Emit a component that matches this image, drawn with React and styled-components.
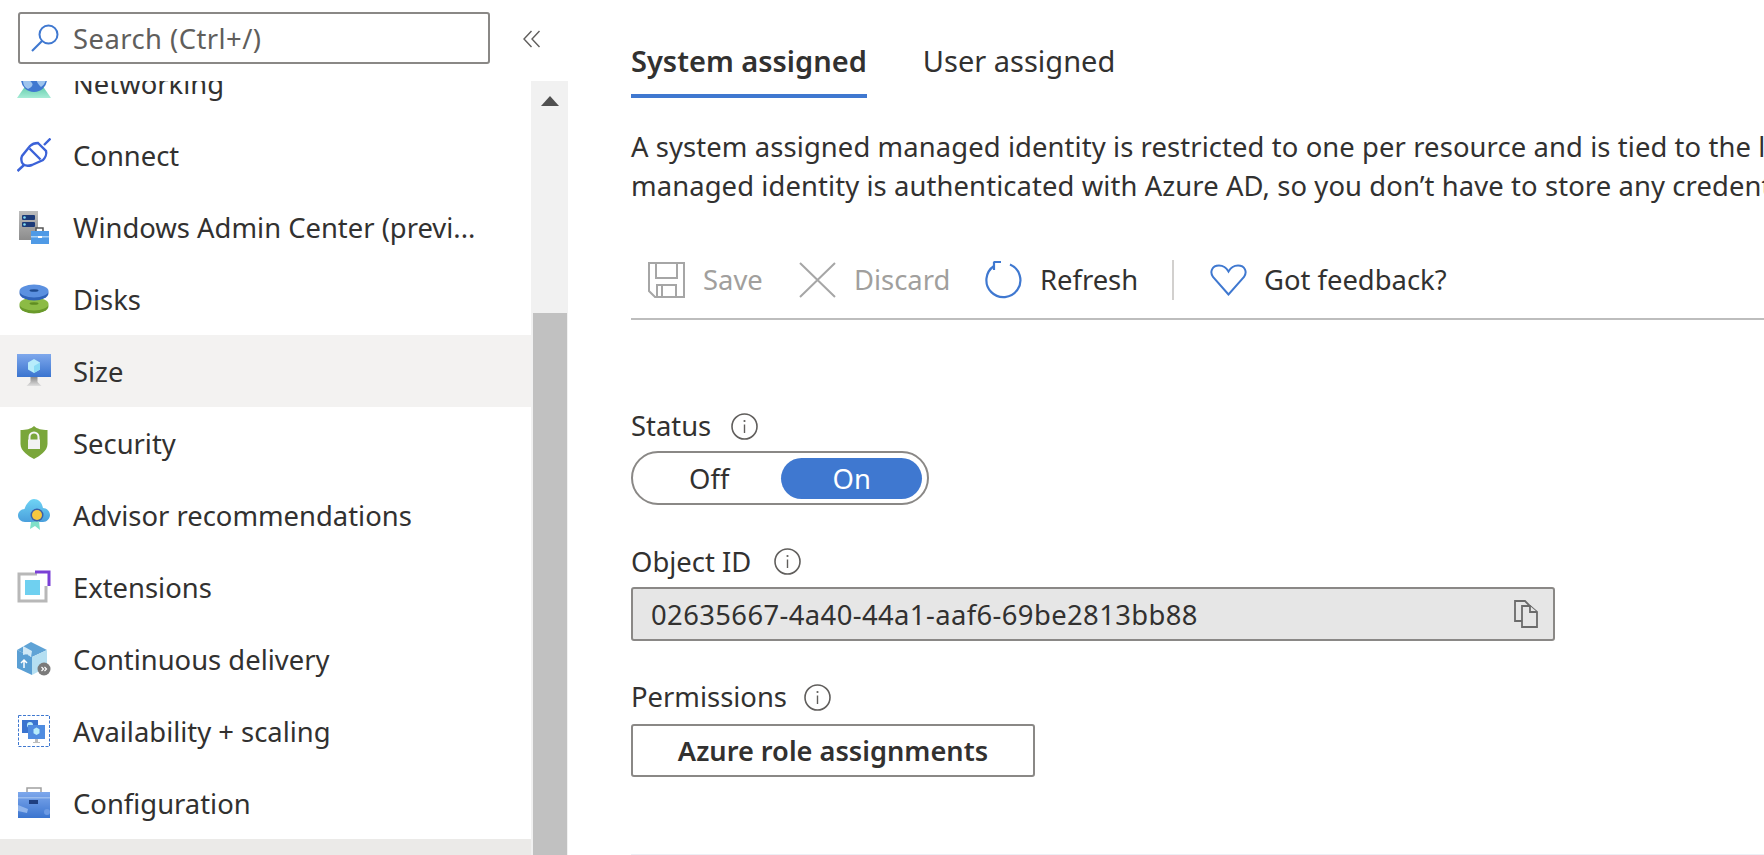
import React from "react";
import styled, { createGlobalStyle } from "styled-components";

const Global = createGlobalStyle`
  html, body { margin: 0; padding: 0; background: #fff; }
  body { font-family: "Noto Sans", "Open Sans", sans-serif; color: #323130; }
  * { box-sizing: border-box; }
`;

const Page = styled.div`
  display: flex;
  width: 1764px;
  height: 855px;
  overflow: hidden;
  background: #fff;
`;

const Sidebar = styled.aside`
  width: 568px;
  flex: none;
  display: flex;
  flex-direction: column;
  height: 855px;
`;

const SearchRow = styled.div`
  height: 81px;
  flex: none;
  padding: 12px 0 0 18px;
  display: flex;
  align-items: flex-start;
`;

const SearchBox = styled.div`
  width: 472px;
  height: 52px;
  border: 2px solid #8a8886;
  border-radius: 3px;
  display: flex;
  align-items: center;
  padding-left: 11px;
  gap: 14px;
  font-size: 27.4px;
  letter-spacing: 0.45px;
  color: #605e5c;
`;

const Collapse = styled.div`
  margin: 18px 0 0 33px;
  display: flex;
`;

const ListArea = styled.div`
  flex: 1;
  display: flex;
  min-height: 0;
`;

const ListClip = styled.div`
  width: 531px;
  overflow: hidden;
`;

const List = styled.ul`
  list-style: none;
  margin: -34px 0 0;
  padding: 0;
`;

const Row = styled.li`
  height: 72px;
  display: flex;
  align-items: center;
  padding-left: 17px;
  gap: 22px;
  font-size: 27.4px;
  white-space: nowrap;
  color: #323130;
  background: ${(p) => p.$bg || "transparent"};
`;

const RowLabel = styled.span`
  padding-top: 1px;
`;

const Track = styled.div`
  width: 37px;
  background: #f1f1f1;
  display: flex;
  flex-direction: column;
  align-items: center;
`;

const ArrowUp = styled.div`
  margin-top: 15px;
  width: 0;
  height: 0;
  border-left: 9px solid transparent;
  border-right: 9px solid transparent;
  border-bottom: 10px solid #505050;
`;

const Thumb = styled.div`
  margin-top: 207px;
  width: 34px;
  flex: 1;
  background: #c1c1c1;
`;

const Main = styled.main`
  flex: 1;
  min-width: 0;
  padding-left: 63px;
  overflow: hidden;
`;

const Tabs = styled.div`
  height: 98px;
  display: flex;
  gap: 56px;
`;

const Tab = styled.div`
  font-size: 29px;
  line-height: 46px;
  height: 98px;
  white-space: nowrap;
  font-weight: ${(p) => (p.$active ? 600 : 400)};
  display: flex;
  align-items: flex-end;
  padding-bottom: 10px;
  border-bottom: 4px solid ${(p) => (p.$active ? "#3f78d0" : "transparent")};
`;

const Desc = styled.p`
  margin: 30px 0 0;
  font-size: 27.4px;
  letter-spacing: 0.1px;
  line-height: 38.5px;
  white-space: nowrap;
`;

const Toolbar = styled.div`
  height: 115px;
  padding: 55px 0 0 17px;
  border-bottom: 2px solid #bdbdbd;
  display: flex;
  align-items: flex-start;
`;

const ToolItem = styled.div`
  width: ${(p) => p.$w}px;
  height: 40px;
  display: flex;
  align-items: center;
  gap: ${(p) => p.$gap || 18}px;
  font-size: 27.4px;
  line-height: 38px;
  white-space: nowrap;
  color: ${(p) => (p.$off ? "#a19f9d" : "#323130")};
`;

const ToolSep = styled.div`
  width: 2px;
  height: 40px;
  margin-right: 36px;
  background: #d2d0ce;
`;

const Label = styled.div`
  height: 36px;
  display: flex;
  align-items: center;
  gap: ${(p) => p.$gap}px;
  font-size: 27.4px;
  line-height: 34px;
  padding-bottom: ${(p) => p.$lift}px;
  margin-top: ${(p) => p.$top}px;
`;

const Toggle = styled.div`
  margin-top: 6px;
  width: 298px;
  height: 54px;
  border: 2px solid #8a8886;
  border-radius: 27px;
  display: flex;
  align-items: center;
  padding: 0 5px 0 4px;
  font-size: 27.4px;
`;

const ToggleOption = styled.div`
  width: ${(p) => p.$w}px;
  height: 41px;
  border-radius: 21px;
  display: flex;
  align-items: center;
  justify-content: center;
  color: ${(p) => (p.$on ? "#fff" : "#323130")};
  background: ${(p) => (p.$on ? "#3f78d0" : "transparent")};
`;

const ReadOnly = styled.div`
  margin-top: 6px;
  width: 924px;
  height: 54px;
  background: #e6e6e6;
  border: 2px solid #8a8886;
  border-radius: 3px;
  display: flex;
  align-items: center;
  justify-content: space-between;
  padding: 0 15px 0 18px;
  font-size: 27.4px;
  letter-spacing: 0.4px;
`;

const RoleButton = styled.button`
  margin-top: 8px;
  display: block;
  width: 404px;
  height: 53px;
  background: #fff;
  border: 2px solid #8a8886;
  border-radius: 3px;
  font: 600 27.2px "Noto Sans", sans-serif;
  color: #323130;
`;

const BottomRule = styled.div`
  margin-top: 77px;
  height: 1px;
  background: #edeff5;
`;

const Ic = ({ children, w = 34, h = 34 }) => (
  <svg width={w} height={h} viewBox={`0 0 ${w} ${h}`} fill="none" style={{ flex: "none" }}>
    {children}
  </svg>
);

const SearchIcon = () => (
  <Ic w={28} h={28}>
    <circle cx="17.5" cy="10.5" r="9" stroke="#3f78d0" strokeWidth="2" />
    <path d="M11 17 1 27" stroke="#3f78d0" strokeWidth="2.2" />
  </Ic>
);

const Chevrons = () => (
  <Ic w={18} h={18}>
    <path d="M8.5 1 1 9l7.5 8M16.5 1 9 9l7.5 8" stroke="#605e5c" strokeWidth="1.4" />
  </Ic>
);

const Networking = () => (
  <Ic>
    <defs>
      <linearGradient id="nb" x1="0" y1="0" x2="0" y2="1">
        <stop offset="0" stopColor="#5cc9a7" />
        <stop offset="1" stopColor="#a6ecd6" />
      </linearGradient>
    </defs>
    <path d="M0 32h34L25 19H9z" fill="url(#nb)" />
    <circle cx="17" cy="13" r="13" fill="#3f78d0" />
    <path d="M6 14c4-2 7 0 9 3s-2 5-4 6c-4-2-5-5-5-9zM20 13c3-2 7-2 9-1 0 4-2 7-5 9-2-2-5-5-4-8z" fill="#9ec4ee" />
  </Ic>
);

const Connect = () => (
  <Ic>
    <g stroke="#3b62d8" strokeWidth="2.4" fill="none">
      <path d="M0.5 33 7 27M27 7 33.5 0.5" />
      <path d="M21 5 29 13c1 3-1 7-3 9L15 27c-3 1-7 1-9-1s-2-6-1-8L13 8c2-2 5-3 8-3z" />
      <path d="M12.5 10.500 23.500 21.500" />
    </g>
  </Ic>
);

const AdminCenter = () => (
  <Ic>
    <defs>
      <linearGradient id="as" x1="0" y1="0" x2="0" y2="1">
        <stop offset="0" stopColor="#bdbdbd" />
        <stop offset="1" stopColor="#8c8c8c" />
      </linearGradient>
    </defs>
    <rect x="2" y="1" width="19" height="29" fill="url(#as)" />
    <rect x="5" y="5" width="13" height="5" rx="1" fill="#1c3a78" />
    <rect x="5" y="12" width="13" height="5" rx="1" fill="#1c3a78" />
    <circle cx="7.500" cy="7.500" r="1.300" fill="#7fdcf5" />
    <circle cx="7.500" cy="14.500" r="1.300" fill="#7fdcf5" />
    <path d="M19 21v-3h7v3" stroke="#555" strokeWidth="1.500" fill="#fff" />
    <rect x="14" y="21" width="18" height="13" fill="#4f9ae6" />
    <rect x="14" y="26" width="18" height="1.500" fill="#a8d0f5" />
    <rect x="21" y="26" width="4" height="2" fill="#fff" />
  </Ic>
);

const Disks = () => (
  <Ic>
    <ellipse cx="17" cy="24" rx="14.500" ry="7.500" fill="#6a9a2b" />
    <ellipse cx="17" cy="22" rx="14.500" ry="6.500" fill="#8cbb45" />
    <ellipse cx="17" cy="21.500" rx="4.500" ry="1.300" fill="#5f8c22" />
    <ellipse cx="17" cy="11" rx="14.500" ry="7.500" fill="#2f62b8" />
    <ellipse cx="17" cy="9" rx="14.500" ry="6.500" fill="#5b90e0" />
    <ellipse cx="17" cy="8.500" rx="4.500" ry="1.300" fill="#1e4a90" />
  </Ic>
);

const SizeIcon = () => (
  <Ic>
    <defs>
      <linearGradient id="sm" x1="0" y1="0" x2="0" y2="1">
        <stop offset="0" stopColor="#7ea8ec" />
        <stop offset="1" stopColor="#3a74cf" />
      </linearGradient>
      <linearGradient id="st" x1="0" y1="0" x2="0" y2="1">
        <stop offset="0" stopColor="#8a8a8a" />
        <stop offset="1" stopColor="#e0e0e0" />
      </linearGradient>
    </defs>
    <path d="M13.500 23h7v5l4 4H9.500l4-4z" fill="url(#st)" />
    <rect width="34" height="23" fill="url(#sm)" />
    <path d="M17 5l6 3.500v7L17 19l-6-3.500v-7z" fill="#b7ecfb" />
    <path d="M17 12l6-3.500v7L17 19z" fill="#8bdcf5" />
  </Ic>
);

const Security = () => (
  <Ic w={34} h={34}>
    <path d="M17 0c3 3 8 4 13.500 4v14c0 7-8 12-13.500 15C11.500 30 3.500 25 3.500 18V4C9 4 14 3 17 0z" fill="#7aa63a" />
    <path d="M12.500 14v-3a4.500 4.500 0 0 1 9 0v3" stroke="#f4f4f4" strokeWidth="2" />
    <rect x="11" y="13.500" width="12" height="9.500" fill="#f2f2f2" />
  </Ic>
);

const Advisor = () => (
  <Ic>
    <defs>
      <linearGradient id="ad" x1="0" y1="0" x2="0" y2="1">
        <stop offset="0" stopColor="#6fd4f5" />
        <stop offset="1" stopColor="#4a9fdc" />
      </linearGradient>
    </defs>
    <path d="M8 24c-4 0-7-3-7-6.500S4 11 7.500 11C9 6 13 1 17 1s8 3 9 9c4 0 7 3.500 7 7s-3 7-7 7z" fill="url(#ad)" />
    <path d="M14 24l-1 7 5-3 5 4-1-9z" fill="#7fe0c8" />
    <circle cx="20" cy="17" r="6.500" fill="#3a5fa8" />
    <circle cx="20" cy="17" r="5" fill="#f6c83f" />
  </Ic>
);

const Extensions = () => (
  <Ic>
    <path d="M20 4H2v27h27V16" stroke="#b8b8b8" strokeWidth="3" fill="none" />
    <path d="M18 2h14v14" stroke="#7a3fd6" strokeWidth="3" fill="none" />
    <rect x="8" y="10" width="15" height="15" fill="#6fd0f0" />
  </Ic>
);

const Delivery = () => (
  <Ic>
    <path d="M0 8 14 0 30 8 15 15z" fill="#5fa3d6" />
    <path d="M0 8v18l15 7V15z" fill="#5a9fd4" />
    <path d="M15 15v18l15-8V8z" fill="#b5dff2" />
    <path d="M6 4l9 5-1 6-4-3-4 1z" fill="#cfe8f6" />
    <path d="M7 26v-8M4 21l3-3 3 3" stroke="#fff" strokeWidth="1.500" />
    <circle cx="27" cy="27" r="6.500" fill="#7a7a7a" />
    <path d="M24.500 25l2 2-2 2M27.500 25l2 2-2 2" stroke="#fff" strokeWidth="1.200" />
  </Ic>
);

const Availability = () => (
  <Ic>
    <rect x="1.500" y="1.500" width="31" height="31" stroke="#3f78d0" strokeWidth="1" strokeDasharray="3 1.500" />
    <rect x="5" y="6" width="16" height="13" fill="#3a74cf" />
    <circle cx="13" cy="11" r="3" fill="#b7ecfb" />
    <rect x="11" y="11" width="17" height="14" fill="#4f8ce0" />
    <path d="M19.500 13.500l3 1.700v4l-3 1.700-3-1.700v-4z" fill="#b7ecfb" />
    <path d="M18 25h3v3h2v1h-7v-1h2z" fill="#bdbdbd" />
  </Ic>
);

const Config = () => (
  <Ic>
    <defs>
      <linearGradient id="cf" x1="0" y1="0" x2="0" y2="1">
        <stop offset="0" stopColor="#7ea8ec" />
        <stop offset="1" stopColor="#3a74cf" />
      </linearGradient>
    </defs>
    <path d="M10 6V2h14v4" stroke="#a0a0a0" strokeWidth="1.500" fill="#fff" />
    <rect x="1" y="6" width="32" height="26" fill="url(#cf)" />
    <rect x="1" y="11" width="32" height="1.500" fill="#b9d2f3" opacity=".6" />
    <rect x="12" y="14" width="9" height="4" fill="#1f3f80" />
    <path d="M1 19l10 4-1 4-9-2z" fill="#8fb4ec" />
    <circle cx="30" cy="26" r="3" fill="#6c9ae4" />
  </Ic>
);

const Save = () => (
  <Ic w={37} h={36}>
    <g stroke="#a6a6a6" strokeWidth="2" fill="none">
      <path d="M1 1h35v34H7l-6-6z" />
      <path d="M8 1v15h21V1M9 35V23h19v12" />
      <path d="M14 24v11" />
    </g>
  </Ic>
);

const Discard = () => (
  <Ic w={37} h={36}>
    <path d="M1 1 36 35M36 1 1 35" stroke="#a6a6a6" strokeWidth="2" />
  </Ic>
);

const Refresh = () => (
  <Ic w={37} h={38}>
    <g stroke="#3f78d0" strokeWidth="2.2" fill="none">
      <path d="M25 3.500A17 17 0 1 1 9 5" />
      <path d="M8.500 1H16M9 1v8" />
    </g>
  </Ic>
);

const Heart = () => (
  <Ic w={37} h={32}>
    <path
      d="M18.500 30.500 3 13C-.5 8 2 1.500 9 1.500c4 0 7.500 2.500 9.500 6 2-3.500 5.500-6 9.500-6 7 0 9.500 6.500 6 11.500z"
      stroke="#3f78d0"
      strokeWidth="2"
    />
  </Ic>
);

const Info = () => (
  <Ic w={27} h={27}>
    <circle cx="13.500" cy="13.500" r="12.500" stroke="#605e5c" strokeWidth="1.600" />
    <path d="M13.500 11.500V20" stroke="#605e5c" strokeWidth="1.400" />
    <circle cx="13.500" cy="8" r="1.100" fill="#605e5c" />
  </Ic>
);

const Copy = () => (
  <Ic w={24} h={28}>
    <g stroke="#6b6b6b" strokeWidth="1.800" fill="#e6e6e6">
      <path d="M1 1h10l6 6v14H1z" />
      <path d="M8 6h8l7 6v15H8z" />
      <path d="M16 6v6h7" />
    </g>
  </Ic>
);

const rows = [
  ["Networking", <Networking />],
  ["Connect", <Connect />],
  ["Windows Admin Center (previ...", <AdminCenter />],
  ["Disks", <Disks />],
  ["Size", <SizeIcon />, "#f3f2f1"],
  ["Security", <Security />],
  ["Advisor recommendations", <Advisor />],
  ["Extensions", <Extensions />],
  ["Continuous delivery", <Delivery />],
  ["Availability + scaling", <Availability />],
  ["Configuration", <Config />],
  ["", null, "#ebeae8"],
];

export default function App() {
  return (
    <Page>
      <Global />
      <Sidebar>
        <SearchRow>
          <SearchBox>
            <SearchIcon />
            Search (Ctrl+/)
          </SearchBox>
          <Collapse>
            <Chevrons />
          </Collapse>
        </SearchRow>
        <ListArea>
          <ListClip>
            <List>
              {rows.map(([label, icon, bg], i) => (
                <Row key={i} $bg={bg}>
                  {icon}
                  <RowLabel>{label}</RowLabel>
                </Row>
              ))}
            </List>
          </ListClip>
          <Track>
            <ArrowUp />
            <Thumb />
          </Track>
        </ListArea>
      </Sidebar>
      <Main>
        <Tabs>
          <Tab $active>System assigned</Tab>
          <Tab>User assigned</Tab>
        </Tabs>
        <Desc>
          A system assigned managed identity is restricted to one per resource and is tied to the lifecycle of this resource.
          <br />
          managed identity is authenticated with Azure AD, so you don’t have to store any credentials in code.
        </Desc>
        <Toolbar>
          <ToolItem $w={151} $off>
            <Save />
            Save
          </ToolItem>
          <ToolItem $w={186} $off>
            <Discard />
            Discard
          </ToolItem>
          <ToolItem $w={187}>
            <Refresh />
            Refresh
          </ToolItem>
          <ToolSep />
          <ToolItem $w={260} $gap={17}>
            <Heart />
            Got feedback?
          </ToolItem>
        </Toolbar>
        <Label $top={89} $gap={20} $lift={2}>
          Status
          <Info />
        </Label>
        <Toggle>
          <ToggleOption $w={146}>Off</ToggleOption>
          <ToggleOption $w={142} $on>
            On
          </ToggleOption>
        </Toggle>
        <Label $top={40} $gap={23} $lift={3}>
          Object ID
          <Info />
        </Label>
        <ReadOnly>
          02635667-4a40-44a1-aaf6-69be2813bb88
          <Copy />
        </ReadOnly>
        <Label $top={39} $gap={17} $lift={2}>
          Permissions
          <Info />
        </Label>
        <RoleButton>Azure role assignments</RoleButton>
        <BottomRule />
      </Main>
    </Page>
  );
}
